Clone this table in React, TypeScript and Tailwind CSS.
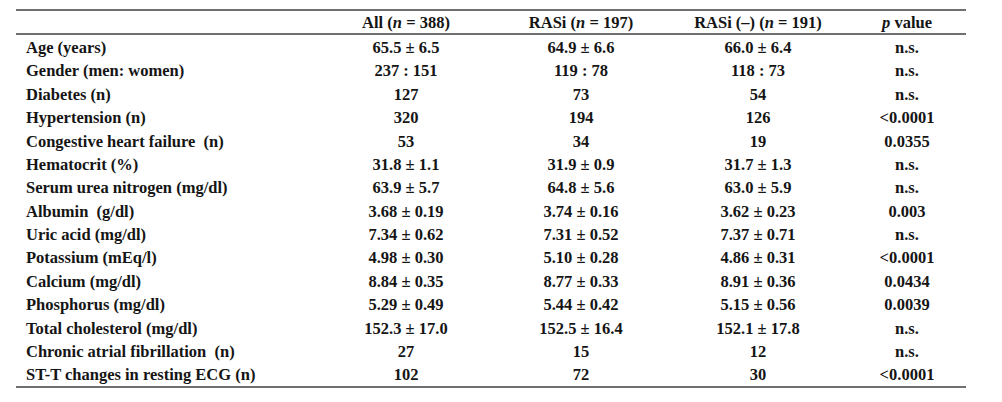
const rows: [string, string, string, string, string][] = [
  ["Age (years)", "65.5 ± 6.5", "64.9 ± 6.6", "66.0 ± 6.4", "n.s."],
  ["Gender (men: women)", "237 : 151", "119 : 78", "118 : 73", "n.s."],
  ["Diabetes (n)", "127", "73", "54", "n.s."],
  ["Hypertension (n)", "320", "194", "126", "<0.0001"],
  ["Congestive heart failure  (n)", "53", "34", "19", "0.0355"],
  ["Hematocrit (%)", "31.8 ± 1.1", "31.9 ± 0.9", "31.7 ± 1.3", "n.s."],
  ["Serum urea nitrogen (mg/dl)", "63.9 ± 5.7", "64.8 ± 5.6", "63.0 ± 5.9", "n.s."],
  ["Albumin  (g/dl)", "3.68 ± 0.19", "3.74 ± 0.16", "3.62 ± 0.23", "0.003"],
  ["Uric acid (mg/dl)", "7.34 ± 0.62", "7.31 ± 0.52", "7.37 ± 0.71", "n.s."],
  ["Potassium (mEq/l)", "4.98 ± 0.30", "5.10 ± 0.28", "4.86 ± 0.31", "<0.0001"],
  ["Calcium (mg/dl)", "8.84 ± 0.35", "8.77 ± 0.33", "8.91 ± 0.36", "0.0434"],
  ["Phosphorus (mg/dl)", "5.29 ± 0.49", "5.44 ± 0.42", "5.15 ± 0.56", "0.0039"],
  ["Total cholesterol (mg/dl)", "152.3 ± 17.0", "152.5 ± 16.4", "152.1 ± 17.8", "n.s."],
  ["Chronic atrial fibrillation  (n)", "27", "15", "12", "n.s."],
  ["ST-T changes in resting ECG (n)", "102", "72", "30", "<0.0001"],
];

function Row({ cells }: { cells: string[] }): JSX.Element {
  return (
    <div className="flex h-[23.4px] items-center pt-[3px]">
      <div className="w-[302px] pl-[10px] whitespace-pre">{cells[0]}</div>
      <div className="w-[176px] text-center">{cells[1]}</div>
      <div className="w-[174px] text-center">{cells[2]}</div>
      <div className="w-[180px] text-center">{cells[3]}</div>
      <div className="w-[118px] text-center">{cells[4]}</div>
    </div>
  );
}

export default function App(): JSX.Element {
  return (
    <div className="w-[1002px] h-[402px] bg-white pl-[16px] pt-[9px] font-['Liberation_Serif',serif] font-bold text-[16.5px] leading-none text-[#151515]">
      <div className="w-[950px]">
        <div className="h-[2px] bg-[#707070]" />
        <div className="flex h-[22px] items-center pt-[3px]">
          <div className="w-[302px]" />
          <div className="w-[176px] text-center">
            All (<i>n</i> = 388)
          </div>
          <div className="w-[174px] text-center">
            RASi (<i>n</i> = 197)
          </div>
          <div className="w-[180px] text-center">
            RASi (–) (<i>n</i> = 191)
          </div>
          <div className="w-[118px] text-center">
            <i>p</i> value
          </div>
        </div>
        <div className="h-[2px] bg-[#707070]" />
        {rows.map((r) => (
          <Row key={r[0]} cells={r} />
        ))}
        <div className="h-[2px] bg-[#707070]" />
      </div>
    </div>
  );
}
